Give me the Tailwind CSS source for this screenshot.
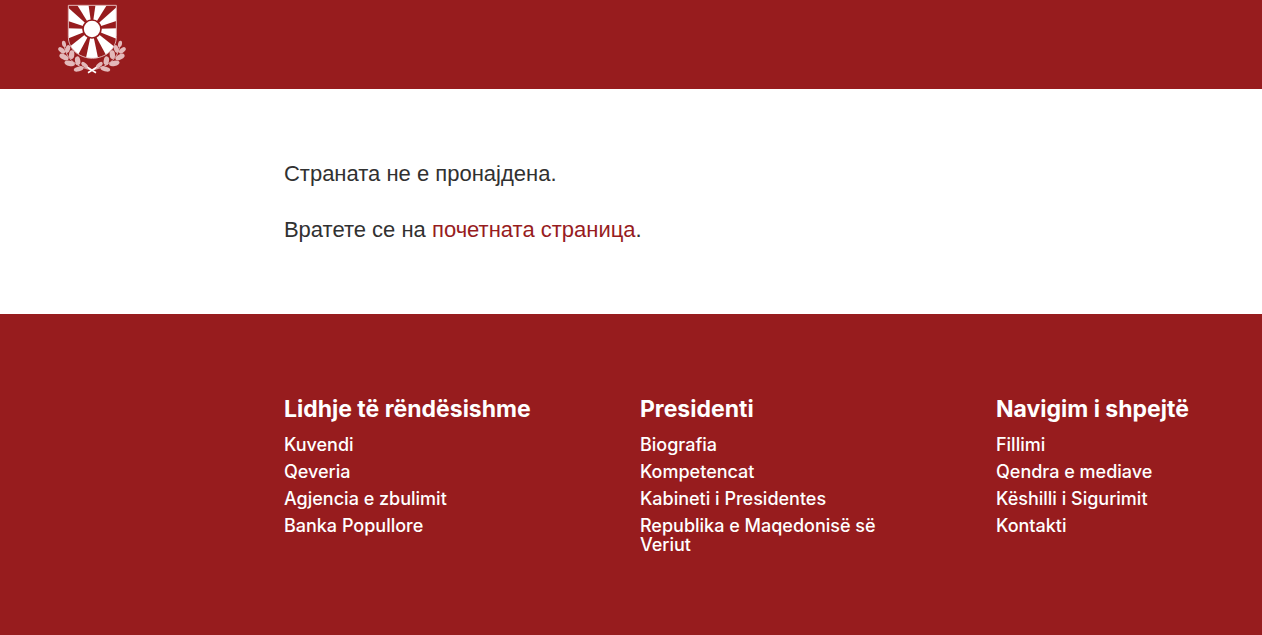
<!DOCTYPE html>
<html lang="sq">
<head>
<meta charset="utf-8">
<meta name="viewport" content="width=device-width, initial-scale=1">
<title>Страната не е пронајдена</title>
<script src="https://cdn.jsdelivr.net/npm/@tailwindcss/browser@4"></script>
</head>
<body class="flex min-h-screen flex-col bg-white font-['Inter','Liberation_Sans',sans-serif]">
<header class="bg-[#971c1e] px-[50px] pb-[5px]">
<a href="#" aria-label="Presidenti" class="block w-[84px]">
<svg class="block h-[84px] w-[84px]" viewBox="0 0 252 252" fill="#fff">
<defs>
<clipPath id="shield"><path d="M55 16H199V110C199 147 167 174 127 175C87 174 55 147 55 110Z"/></clipPath>
<path id="ray" d="M126 87L99 217H153Z"/>
<g id="branch" fill="#e3b9ba">
<path d="M42 128C44 170 72 200 126 210" fill="none" stroke="#e3b9ba" stroke-width="3"/>
<ellipse cx="42" cy="132" rx="6" ry="10" transform="rotate(-10 42 132)"/>
<ellipse cx="35" cy="151" rx="7" ry="12" transform="rotate(-50 35 151)"/>
<ellipse cx="53" cy="147" rx="7" ry="12" transform="rotate(18 53 147)"/>
<ellipse cx="42" cy="171" rx="8" ry="15" transform="rotate(-62 42 171)"/>
<ellipse cx="65" cy="164" rx="8" ry="13" transform="rotate(5 65 164)"/>
<ellipse cx="59" cy="190" rx="8" ry="16" transform="rotate(-78 59 190)"/>
<ellipse cx="83" cy="182" rx="8" ry="13" transform="rotate(-10 83 182)"/>
<ellipse cx="86" cy="207" rx="7" ry="15" transform="rotate(-105 86 207)"/>
<ellipse cx="104" cy="195" rx="6" ry="12" transform="rotate(-50 104 195)"/>
<path d="M112 202L138 218" stroke="#fff" stroke-width="5"/>
</g>
</defs>
<use href="#branch"/>
<use href="#branch" transform="translate(252 0) scale(-1 1)"/>
<path d="M55 16H199V110C199 147 167 174 127 175C87 174 55 147 55 110Z" fill="#971c1e"/>
<g clip-path="url(#shield)">
<use href="#ray"/>
<use href="#ray" transform="rotate(40 126 87)"/>
<use href="#ray" transform="rotate(80 126 87)"/>
<use href="#ray" transform="rotate(120 126 87)"/>
<use href="#ray" transform="rotate(160 126 87)"/>
<use href="#ray" transform="rotate(200 126 87)"/>
<use href="#ray" transform="rotate(240 126 87)"/>
<use href="#ray" transform="rotate(280 126 87)"/>
<use href="#ray" transform="rotate(320 126 87)"/>
</g>
<circle cx="126" cy="87" r="27" stroke="#971c1e" stroke-width="5"/>
<path d="M55 16H199V110C199 147 167 174 127 175C87 174 55 147 55 110Z" fill="none" stroke="#e3b9ba" stroke-width="3"/>
</svg>
</a>
</header>
<main class="flex flex-col gap-5 bg-white pt-[67px] pb-[66px] pl-[22.5%] pr-6 font-['Liberation_Sans',Arial,sans-serif] text-[22px] leading-9 text-[#313131]">
<p>Страната не е пронајдена.</p>
<p>Вратете се на <a href="#" class="text-[#971c1e]">почетната страница</a>.</p>
</main>
<footer class="grow bg-[#971c1e] pt-20 pb-20 pl-[22.5%] pr-1.5 text-white">
<div class="grid grid-cols-3 gap-24 text-lg leading-[19px] font-medium">
<section>
<h2 class="mb-[11px] text-[23px] leading-[30px] font-bold whitespace-nowrap">Lidhje të rëndësishme</h2>
<ul class="flex flex-col gap-2">
<li><a href="#">Kuvendi</a></li><li><a href="#">Qeveria</a></li><li><a href="#">Agjencia e zbulimit</a></li><li><a href="#">Banka Popullore</a></li>
</ul>
</section>
<section>
<h2 class="mb-[11px] text-[23px] leading-[30px] font-bold whitespace-nowrap">Presidenti</h2>
<ul class="flex flex-col gap-2">
<li><a href="#">Biografia</a></li><li><a href="#">Kompetencat</a></li><li><a href="#">Kabineti i Presidentes</a></li><li><a href="#">Republika e Maqedonisë së Veriut</a></li>
</ul>
</section>
<section>
<h2 class="mb-[11px] text-[23px] leading-[30px] font-bold whitespace-nowrap">Navigim i shpejtë</h2>
<ul class="flex flex-col gap-2">
<li><a href="#">Fillimi</a></li><li><a href="#">Qendra e mediave</a></li><li><a href="#">Këshilli i Sigurimit</a></li><li><a href="#">Kontakti</a></li>
</ul>
</section>
</div>
</footer>
</body>
</html>
